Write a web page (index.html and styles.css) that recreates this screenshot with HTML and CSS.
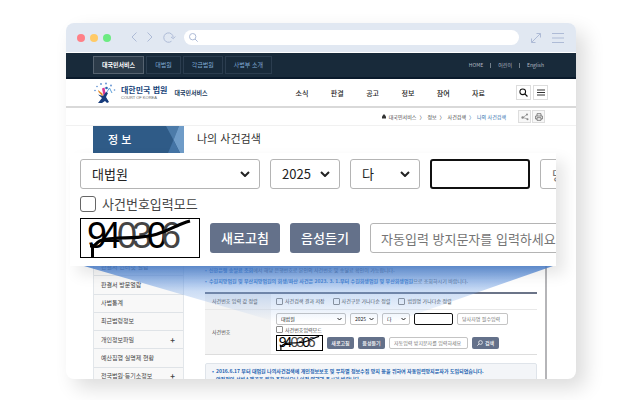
FILE: index.html
```html
<!DOCTYPE html>
<html lang="ko">
<head>
<meta charset="utf-8">
<title>나의 사건검색</title>
<link rel="stylesheet" href="styles.css">
</head>
<body>
<svg class="defs" aria-hidden="true">
  <symbol id="chevron" viewBox="0 0 10 6"><path d="M1 1l4 4 4-4" fill="none" stroke="#222" stroke-width="2"/></symbol>
  <symbol id="search" viewBox="0 0 12 12"><circle cx="5" cy="5" r="3.8" fill="none" stroke="currentColor" stroke-width="1.4"/><path d="M7.8 7.8L11.3 11.3" stroke="currentColor" stroke-width="1.6"/></symbol>
</svg>

<div class="window">
  <header class="chrome">
    <span class="dots"><i class="dot red"></i><i class="dot yellow"></i><i class="dot green"></i></span>
    <span class="history">
      <svg width="6" height="10" viewBox="0 0 6 10"><path d="M5.500 .5L1 5l4.500 4.500"/></svg>
      <svg width="6" height="10" viewBox="0 0 6 10"><path d="M.5 .5L5 5 .5 9.500"/></svg>
      <svg width="13" height="11" viewBox="0 0 13 11"><path d="M8.500 9.200A4.700 4.700 0 1 1 10.200 5.500M8 5l2.300 1.700L12.300 4.500"/></svg>
    </span>
    <label class="address"><svg width="9" height="9" viewBox="0 0 9 9"><circle cx="3.700" cy="3.700" r="3.200"/><path d="M6 6l2.700 2.700"/></svg><input type="text" aria-label="주소"></label>
    <span class="tools">
      <svg width="10" height="10" viewBox="0 0 10 10"><path d="M.7 9.300L9.300 .7M5.500 .5h4v4M.5 5.500v4h4"/></svg>
      <svg width="12" height="10" viewBox="0 0 12 10"><path d="M0 .5h12M0 5h12M0 9.500h12"/></svg>
    </span>
  </header>

  <nav class="topbar">
    <div class="tabs"><a href="#" class="on">대국민서비스</a><a href="#">대법원</a><a href="#">각급법원</a><a href="#">사법부 소개</a></div>
    <div class="links"><a href="#">HOME</a><i></i><a href="#">어린이</a><i></i><a href="#">English</a></div>
  </nav>

  <div class="site-head">
    <a href="#" class="brand">
      <svg width="24" height="22" viewBox="0 0 24 22">
        <g fill="#5d8fd0"><circle cx="2" cy="8.500" r=".8"/><circle cx="4" cy="4.500" r=".8"/><circle cx="8" cy="2" r=".9"/><circle cx="13" cy="1.500" r=".9"/><circle cx="18" cy="3.500" r=".9"/><circle cx="21.500" cy="8" r=".8"/></g>
        <path d="M5 8l4.500 3.500 .5 3.500-4.500-5z" fill="#e58a28"/>
        <path d="M9 6.500l2.500-1 1 5.500-2 3z" fill="#d63895"/>
        <path d="M12.500 12l4-6 2.500 5" fill="none" stroke="#5c9fd9"/>
        <circle cx="13.500" cy="6" r="1.300" fill="#2b66b5"/>
        <path d="M5 12.500l5 1.500 3-4 2 1-2 4 3 5-2 1-2-2-3 2H5l4-5z" fill="#173c7c"/>
      </svg>
      <span class="brand-name"><b>대한민국 법원</b><small>COURT OF KOREA</small></span>
      <strong>대국민서비스</strong>
    </a>
    <nav class="menu"><a href="#">소식</a><a href="#">판결</a><a href="#">공고</a><a href="#">정보</a><a href="#">참여</a><a href="#">자료</a></nav>
    <div class="squares">
      <button type="button" aria-label="검색"><svg width="9" height="9"><use href="#search"/></svg></button>
      <button type="button" aria-label="전체메뉴"><svg width="8" height="7" viewBox="0 0 8 7"><path d="M0 1h8M0 3.500h8M0 6h8" stroke="#333"/></svg></button>
    </div>
  </div>

  <div class="crumbs">
    <svg width="4" height="5" viewBox="0 0 4 5"><path d="M2 0l2 2.500v2H0v-2z" fill="#333"/></svg>
    <a href="#">대국민서비스</a><i>〉</i><a href="#">정보</a><i>〉</i><a href="#">사건검색</a><i class="here">〉</i><a href="#" class="here">나의 사건검색</a>
    <div class="squares light">
      <button type="button" aria-label="공유"><svg width="8" height="8" viewBox="0 0 8 8"><path d="M6 1.500L2 4.500l4.500 1.500" fill="none" stroke="#888" stroke-width=".7"/><circle cx="6" cy="1.500" r="1" fill="#888"/><circle cx="1.600" cy="4.500" r="1.200" fill="#888"/><circle cx="6.500" cy="6.200" r="1" fill="#888"/></svg></button>
      <button type="button" aria-label="인쇄"><svg width="8" height="8" viewBox="0 0 8 8"><path d="M2 3V.7h4V3M2 6H.6V3h6.800v3H6M2 4.700h4v2.600H2z" fill="none" stroke="#777" stroke-width=".9"/></svg></button>
    </div>
  </div>

  <main class="body">
    <div class="banner">
      <h2>정 보</h2>
      <svg viewBox="0 0 30 27"><path d="M12 0h13l-5.500 14z" fill="#4c7ba9"/><path d="M25 0h5v27h-4l-6.500-13z" fill="#6f9cc8"/><path d="M19.500 14L26 27H14z" fill="#4474a5"/></svg>
    </div>
    <h1>나의 사건검색</h1>

    <ul class="side">
      <li><a href="#">판결서 인터넷 열람</a></li>
      <li><a href="#">판결서 방문열람</a></li>
      <li><a href="#">사법통계</a></li>
      <li><a href="#">최근법령정보</a></li>
      <li><a href="#">개인정보파일</a><b>+</b></li>
      <li><a href="#">예산집행 실명제 현황</a></li>
      <li><a href="#">전국법원·등기소정보</a><b>+</b></li>
    </ul>

    <section class="content">
      <ul class="notes">
        <li><em>신한은행 송달료 조회</em>에서 해당 은행번호로 본인의 사건번호 및 송달료 확인이 가능합니다.</li>
        <li><em>수원지방법원 및 부산지방법원의 회생/파산 사건은 2023. 3. 1.부터 수원회생법원 및 부산회생법원</em>으로 조회하시기 바랍니다.</li>
      </ul>
      <table class="form">
        <tr class="sort"><th>사건번호 입력 값 정렬</th><td><div class="line">
          <label class="check"><input type="checkbox">사건검색 결과 저장</label>
          <label class="check"><input type="checkbox">사건구분 가나다순 정렬</label>
          <label class="check"><input type="checkbox">법원명 가나다순 정렬</label></div></td></tr>
        <tr class="number"><th>사건번호</th><td><div class="fields">
          <div class="line">
            <span class="pick court"><select aria-label="법원"><option>대법원</option></select><svg><use href="#chevron"/></svg></span>
            <span class="pick year"><select aria-label="연도"><option>2025</option></select><svg><use href="#chevron"/></svg></span>
            <span class="pick kind"><select aria-label="구분"><option>다</option></select><svg><use href="#chevron"/></svg></span>
            <input class="box serial" type="text" aria-label="일련번호">
            <input class="box party" type="text" placeholder="당사자명 필수입력" aria-label="당사자명">
          </div>
          <label class="check"><input type="checkbox">사건번호입력모드</label>
          <div class="line">
            <svg class="captcha" viewBox="0 0 120 40" role="img" aria-label="940306">
              <text x="7" y="30">9</text><text x="21" y="30">4</text><text x="37" y="30" class="soft">0</text><text x="52" y="30" class="soft">3</text><text x="67" y="30">0</text><text x="81" y="30" class="soft">6</text>
              <path d="M12.500 40V28H10M14 28C20 20 27 21 38 20C58 20 70 19 80 15C92 11 98 6 110 3"/>
            </svg>
            <button type="button" class="btn">새로고침</button>
            <button type="button" class="btn">음성듣기</button>
            <input class="box guard" type="text" placeholder="자동입력 방지문자를 입력하세요" aria-label="자동입력 방지문자">
            <button type="button" class="btn"><svg class="find"><use href="#search"/></svg>검색</button>
          </div></div></td></tr>
      </table>
      <div class="notice">
        <p>2016.6.17 부터 대법원 나의사건검색에 개인정보보호 및 무차별 정보수집 방지 등을 위하여 자동입력방지문자가 도입되었습니다.</p>
        <p class="next">안정적인 서비스제공을 위한 조치이오니 이점 양해해 주시기 바랍니다.</p>
      </div>
    </section>
  </main>

  <div class="beam"></div>
  <section class="lens" aria-label="입력란 확대">
    <div class="clip fields">
      <div class="line">
        <span class="pick court"><select aria-label="법원"><option>대법원</option></select><svg><use href="#chevron"/></svg></span>
        <span class="pick year"><select aria-label="연도"><option>2025</option></select><svg><use href="#chevron"/></svg></span>
        <span class="pick kind"><select aria-label="구분"><option>다</option></select><svg><use href="#chevron"/></svg></span>
        <input class="box serial" type="text" aria-label="일련번호">
        <input class="box party" type="text" placeholder="당사자명 필수입력" aria-label="당사자명">
      </div>
      <label class="check"><input type="checkbox">사건번호입력모드</label>
      <div class="line">
        <svg class="captcha" viewBox="0 0 120 40" role="img" aria-label="940306">
          <text x="7" y="30">9</text><text x="21" y="30">4</text><text x="37" y="30" class="soft">0</text><text x="52" y="30" class="soft">3</text><text x="67" y="30">0</text><text x="81" y="30" class="soft">6</text>
          <path d="M12.500 40V28H10M14 28C20 20 27 21 38 20C58 20 70 19 80 15C92 11 98 6 110 3"/>
        </svg>
        <button type="button" class="btn">새로고침</button>
        <button type="button" class="btn">음성듣기</button>
        <input class="box guard" type="text" placeholder="자동입력 방지문자를 입력하세요" aria-label="자동입력 방지문자">
      </div>
    </div>
  </section>
</div>
</body>
</html>
```
FILE: styles.css
```css
* { box-sizing: border-box; }
body, h1, h2, ul, p { margin: 0; padding: 0; }
body {
  min-height: 100vh;
  padding: 23px 54px 21px 66px;
  overflow: hidden;
  background: #fff;
  color: #444;
  font: 6px/8px "Noto Sans CJK KR", "Noto Sans", sans-serif;
}
a { color: inherit; text-decoration: none; }
i { font-style: normal; }
ul { list-style: none; }
svg { display: block; flex: none; }
button, input, select { margin: 0; padding: 0; font: inherit; color: inherit; border: 0; background: none; }
.defs { position: absolute; width: 0; height: 0; }

.window {
  position: relative;
  height: calc(100vh - 44px);
  overflow: hidden;
  border-radius: 8px;
  background: #fff;
  box-shadow: 9px 9px 20px rgba(0, 0, 0, .14);
}

/* browser bar */
.chrome { display: flex; align-items: center; height: 30px; padding: 0 12px 0 11px; background: #e1e8f2; border-bottom: 1px solid #fff; }
.chrome svg { fill: none; stroke: #aebbd6; }
.dots { display: flex; gap: 5px; }
.dot { width: 8px; height: 8px; border-radius: 50%; }
.red { background: #ff8087; }
.yellow { background: #ffca66; }
.green { background: #6ceb82; }
.history { display: flex; gap: 10px; margin: 0 8px 0 20px; }
.address { display: flex; align-items: center; flex: 1; height: 15px; padding-left: 5px; border-radius: 8px; background: #fff; }
.address input { flex: 1; min-width: 0; margin-left: 4px; outline: 0; }
.tools { display: flex; gap: 11px; margin-left: 12px; }

/* site top bar */
.topbar { display: flex; justify-content: space-between; align-items: center; height: 26px; padding: 0 32px 0 27px; background: #182a3a; border-bottom: 2px solid #0a1a2b; }
.tabs { display: flex; gap: 2px; }
.tabs a { height: 18px; padding: 0 8px; border: 1px solid #2b3d4f; color: #7fa9d3; line-height: 16px; }
.tabs .on { border-color: #566370; background: #2c3b49; color: #fff; font-weight: 700; }
.links { display: flex; gap: 7px; align-items: center; color: #b4bcc4; font-size: 5px; }
.links i { width: 1px; height: 5px; background: #72808c; }

/* brand and main menu */
.site-head { display: flex; align-items: center; height: 29px; padding: 0 28px 0 27px; border-bottom: 2px solid #d9d9d9; }
.brand { display: flex; align-items: center; color: #174479; }
.brand-name { display: flex; flex-direction: column; margin: 0 7px 0 4px; }
.brand-name b { font-size: 8px; line-height: 10px; }
.brand-name small { color: #666; font: 4px/6px "Liberation Sans", sans-serif; }
.brand strong { color: #213a5c; }
.menu { display: flex; flex: 1; justify-content: space-between; margin: 0 31px 0 88px; color: #222; font-size: 7px; font-weight: 500; }
.squares { display: flex; gap: 2px; color: #111; }
.squares button { display: grid; place-items: center; width: 15px; height: 15px; border: 1px solid #ddd; background: #fff; }
.light { gap: 1px; margin-left: 9px; }
.light button { width: 13px; height: 13px; background: #f7f7f7; }

.crumbs { display: flex; justify-content: flex-end; align-items: center; gap: 3px; height: 18px; padding-right: 31px; border-bottom: 1px solid #f1f1f1; font-size: 5px; }
.crumbs i { width: 5px; }
.crumbs .here { color: #2b6cab; }

/* page body */
.body { display: grid; grid-template-columns: 91px minmax(0, 1fr); grid-template-rows: 131px auto; column-gap: 13px; padding: 0 29px 0 27px; }
.banner { display: flex; justify-content: space-between; height: 27px; padding-left: 15px; background: #2f5b87; color: #fff; }
.banner h2 { font-size: 11px; font-weight: 500; line-height: 27px; }
.banner svg { width: 30px; height: 27px; }
h1 { color: #333; font-size: 11px; font-weight: 400; line-height: 24px; }
.side { display: grid; grid-auto-rows: 1fr; height: 130px; border: 1px solid #e2e6ea; background: #f8f8f8; }
.side li { display: flex; justify-content: space-between; align-items: center; padding: 0 8px 0 7px; border-bottom: 1px solid #dfe3e7; }
.side b { font-size: 8px; }

.content { padding: 7px 8px 0; border-right: 2px solid #b5b5b8; font-size: 5px; }
.notes { line-height: 11px; white-space: nowrap; }
.notes li::before, .notice p::before { content: "•"; display: inline-block; width: 4px; color: #1f6fc4; }
.notes em { color: #1f6fc4; font-style: normal; font-weight: 700; }
.form { width: 100%; margin-top: 6px; border-collapse: collapse; border-top: 2px solid #6b7488; border-bottom: 1px solid #ddd; }
.form th { width: 66px; padding: 0 0 0 7px; background: #f4f4f4; font-weight: 400; text-align: left; }
.form td { padding: 0 0 0 5px; }
.sort { height: 16px; border-bottom: 1px solid #e8e8e8; }
.number { height: 45px; }
.sort .line { gap: 8px; }
.notice { height: 40px; margin-top: 8px; padding: 3px 6px; border: 1px solid #dfe4ea; border-radius: 2px; background: #f3f5f8; color: #1a62b0; font-weight: 700; white-space: nowrap; }
.notice .next::before { visibility: hidden; }

/* case number fields, compact size */
.line { display: flex; align-items: center; gap: 4px; }
.fields { display: flex; flex-direction: column; gap: 1px; }
.check { display: flex; align-items: center; gap: 2px; line-height: 8px; white-space: nowrap; }
.check input { appearance: none; width: 7px; height: 7px; border: 1px solid #8b8b8b; border-radius: 1px; background: #fff; }
.pick { position: relative; flex: none; }
.pick select { display: block; appearance: none; width: 100%; height: 12px; padding-left: 4px; border: 1px solid #c4c4c4; border-radius: 2px; background: #fff; color: #222; }
.pick svg { position: absolute; right: 4px; top: 4px; width: 5px; height: 4px; }
.box { flex: none; height: 12px; padding-left: 4px; border: 1px solid #c4c4c4; border-radius: 2px; background: #fff; }
.box::placeholder { color: #757575; opacity: 1; }
.court { width: 70px; }
.year, .kind { width: 28px; }
.serial { width: 39px; border-color: #111; }
.party { width: 51px; }
.guard { width: 79px; }
.captcha { width: 47px; height: 16px; background: #fff; box-shadow: inset 0 0 0 1px #000; font: 36px "Liberation Sans", sans-serif; }
.captcha .soft { fill: #444; }
.captcha path { fill: none; stroke: #000; stroke-width: 3px; }
.btn { display: flex; align-items: center; justify-content: center; gap: 2px; flex: none; width: 27px; height: 12px; border-radius: 2px; background: #64718a; color: #fff; font-weight: 500; white-space: nowrap; }
.find { width: 6px; height: 6px; transform: scaleX(-1); }

/* light cone from the form to the enlarged fields */
.beam { position: absolute; left: 18px; right: 23px; top: 243px; height: 56px; background: linear-gradient(rgba(76, 133, 216, .85), rgba(120, 165, 228, .38) 45%, rgba(160, 190, 235, 0)); clip-path: polygon(0 0, 100% 0, 66% 100%, 41% 100%); }

/* enlarged fields */
.lens { position: absolute; left: 4px; right: 20px; top: 130px; background: #fff; box-shadow: 8px 8px 14px rgba(0, 0, 0, .1); font-size: 13px; line-height: 16px; }
.clip { gap: 6px; padding: 6px 0 8px 10px; overflow: hidden; }
.lens .line { gap: 10px; }
.lens .check { gap: 6px; line-height: 17px; }
.lens .check input { width: 16px; height: 16px; border-color: #666; border-radius: 3px; }
.lens .pick select, .lens .box { height: 30px; padding-left: 11px; border-color: #b4b4b4; border-radius: 3px; }
.lens .pick svg { right: 10px; top: 12px; width: 10px; height: 6px; }
.lens .court { width: 180px; }
.lens .year, .lens .kind { width: 70px; }
.lens .serial { width: 100px; border: 2px solid #111; }
.lens .party { width: 130px; }
.lens .guard { width: 210px; padding-left: 10px; }
.lens .captcha { width: 120px; height: 40px; }
.lens .btn { width: 70px; height: 30px; border-radius: 3px; }
```
